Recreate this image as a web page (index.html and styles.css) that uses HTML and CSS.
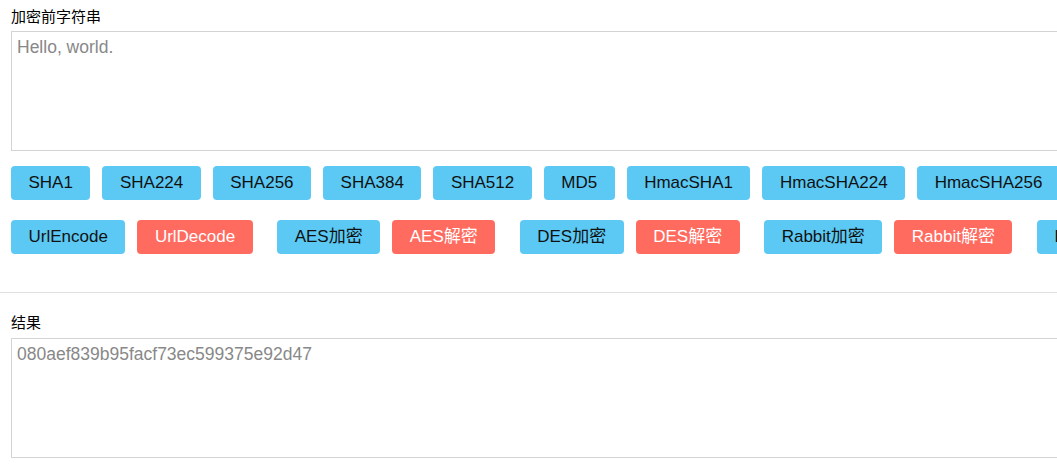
FILE: index.html
```html
<!DOCTYPE html>
<html lang="zh-CN">
<head>
<meta charset="utf-8">
<title>加密工具</title>
<link rel="stylesheet" href="styles.css">
</head>
<body>
<div class="page">
  <section class="panel top">
    <div class="label">加密前字符串</div>
    <textarea class="box">Hello, world.</textarea>
    <div class="row row-hash">
      <button class="btn blue">SHA1</button>
      <button class="btn blue">SHA224</button>
      <button class="btn blue">SHA256</button>
      <button class="btn blue">SHA384</button>
      <button class="btn blue">SHA512</button>
      <button class="btn blue">MD5</button>
      <button class="btn blue">HmacSHA1</button>
      <button class="btn blue">HmacSHA224</button>
      <button class="btn blue">HmacSHA256</button>
      <button class="btn blue">HmacSHA384</button>
      <button class="btn blue">HmacSHA512</button>
    </div>
    <div class="row row-pairs">
      <div class="pair"><button class="btn blue">UrlEncode</button><button class="btn red">UrlDecode</button></div>
      <div class="pair"><button class="btn blue">AES加密</button><button class="btn red">AES解密</button></div>
      <div class="pair"><button class="btn blue">DES加密</button><button class="btn red">DES解密</button></div>
      <div class="pair"><button class="btn blue">Rabbit加密</button><button class="btn red">Rabbit解密</button></div>
      <div class="pair"><button class="btn blue">RC4加密</button><button class="btn red">RC4解密</button></div>
    </div>
  </section>
  <hr class="divider">
  <section class="panel bottom">
    <div class="label">结果</div>
    <textarea class="box">080aef839b95facf73ec599375e92d47</textarea>
  </section>
</div>
</body>
</html>
```
FILE: styles.css
```css
html, body {
  margin: 0;
  padding: 0;
  overflow: hidden;
  background: #fff;
}
body {
  font-family: "Liberation Sans", Arial, "Noto Sans CJK SC", sans-serif;
  color: #000;
}
.page {
  width: 1400px;
}
.panel {
  padding-left: 11px;
}
.top {
  padding-top: 6px;
}
.label {
  font-size: 15px;
  line-height: 20px;
  margin-bottom: 5px;
  font-family: "Noto Sans CJK SC", "Liberation Sans", sans-serif;
}
.bottom .label {
  margin-bottom: 6px;
}
.box {
  display: block;
  box-sizing: border-box;
  width: 1200px;
  height: 120px;
  margin: 0;
  padding: 5px 5px;
  border: 1px solid #d4d4d4;
  border-radius: 0;
  resize: none;
  outline: none;
  font-family: "Liberation Sans", Arial, sans-serif;
  font-size: 17.5px;
  line-height: 21px;
  color: #888;
  background: #fff;
}
.row {
  display: flex;
  flex-wrap: nowrap;
  gap: 12px;
}
.row-hash {
  margin-top: 15px;
}
.row-pairs {
  margin-top: 20px;
  gap: 24.5px;
}
.pair {
  display: flex;
  gap: 12px;
}
.btn {
  flex: none;
  height: 34px;
  padding: 0 17.5px;
  border: none;
  border-radius: 4px;
  font-family: "Liberation Sans", Arial, "Noto Sans CJK SC", sans-serif;
  font-size: 17px;
  line-height: 34px;
  white-space: nowrap;
  cursor: pointer;
}
.blue {
  background: #5bc9f4;
  color: #111;
}
.red {
  background: #ff6b5f;
  color: #fff;
}
.divider {
  margin: 38px 0 0;
  border: none;
  border-top: 1px solid #e0e0e0;
  height: 0;
  margin-bottom: 19px;
}
```
